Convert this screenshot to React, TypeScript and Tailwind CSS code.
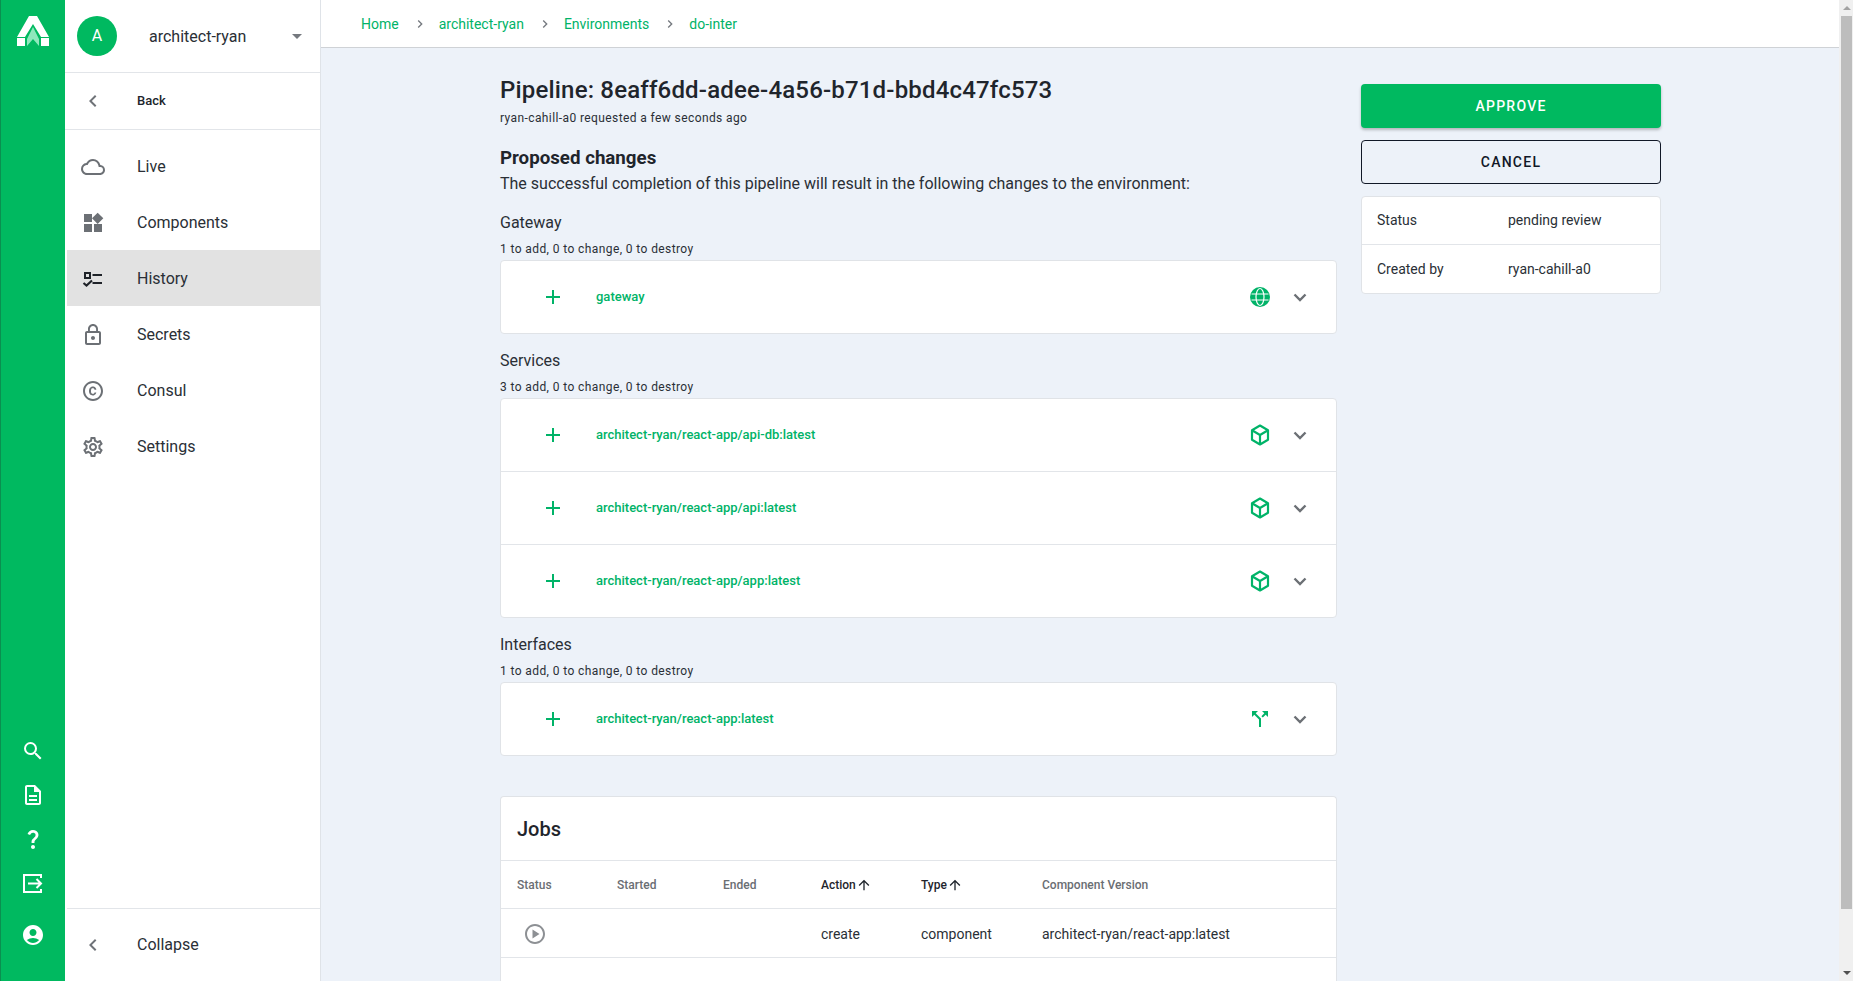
import type { ReactNode } from "react";
import {
  MdAccountCircle,
  MdAdd,
  MdArrowDropDown,
  MdArrowUpward,
  MdCallSplit,
  MdChevronLeft,
  MdLockOutline,
  MdNavigateNext,
  MdOutlineCloud,
  MdOutlineCopyright,
  MdOutlineDescription,
  MdOutlinePlayCircle,
  MdOutlineSettings,
  MdQuestionMark,
  MdSearch,
  MdWidgets,
} from "react-icons/md";

function Logo() {
  return (
    <svg width="34" height="32" viewBox="0 0 34 32">
      <path d="M13 1h8l12 21h-8L17 9 9 22H1z" fill="#fff" />
      <path d="M17 12l6 12v7l-6-7-6 7v-7z" fill="#8fe8bd" />
      <rect x="1" y="23" width="8" height="8" fill="#fff" />
      <rect x="25" y="23" width="8" height="8" fill="#fff" />
    </svg>
  );
}

function HistoryIcon() {
  return (
    <svg width="24" height="24" viewBox="0 0 24 24" fill="none" stroke="#1f2329" strokeWidth="2.200">
      <rect x="4" y="6" width="5" height="5" strokeWidth="2" />
      <path d="M11.500 8h9.500M11.500 16h9.500" />
      <path d="M2.500 16l3 2.500L11 13.500" />
    </svg>
  );
}

function GlobeIcon() {
  return (
    <svg width="24" height="24" viewBox="0 0 24 24" fill="none">
      <circle cx="12" cy="12" r="10" fill="#00b368" />
      <g stroke="#fff" strokeWidth="1.200">
        <ellipse cx="12" cy="12" rx="4" ry="8.500" />
        <path d="M3.500 9h17M3.500 15h17" />
      </g>
    </svg>
  );
}

function ExitIcon() {
  return (
    <svg width="24" height="24" viewBox="0 0 24 24" fill="none" stroke="#fff" strokeWidth="2">
      <path d="M20 7V4H3v17h17v-3" />
      <path d="M7 12.500h13M15.500 8l4.500 4.500-4.500 4.500" />
    </svg>
  );
}

function CubeIcon() {
  return (
    <svg width="24" height="24" viewBox="0 0 24 24" fill="none" stroke="#00b368" strokeWidth="2.200" strokeLinejoin="round">
      <path d="M12 2.500l8 4.700v9.600L12 21.500l-8-4.700V7.200z" />
      <path d="M4 7.200l8 4.800 8-4.800M12 12v9.500" />
    </svg>
  );
}

function ChevronDown() {
  return (
    <svg width="24" height="24" viewBox="0 0 24 24" fill="none" stroke="#6c7075" strokeWidth="2.400">
      <path d="M6.500 9.500l5.500 5.500 5.500-5.500" />
    </svg>
  );
}

const navItems = [
  { label: "Live", icon: <MdOutlineCloud size={28} /> },
  { label: "Components", icon: <MdWidgets size={24} /> },
  { label: "History", icon: <HistoryIcon />, active: true },
  { label: "Secrets", icon: <MdLockOutline size={26} /> },
  { label: "Consul", icon: <MdOutlineCopyright size={24} /> },
  { label: "Settings", icon: <MdOutlineSettings size={24} /> },
];

function Sidebar() {
  return (
    <aside className="flex w-[256px] shrink-0 flex-col border-r border-[#dfe3e8] bg-white">
      <div className="flex h-[73px] items-center border-b border-[#e2e5e9] pl-[12px] pr-[11px]">
        <div className="flex h-10 w-10 items-center justify-center rounded-full bg-[#00b960] text-base text-white">
          A
        </div>
        <span className="ml-8 flex-1 pt-[2px] text-base text-[#2a2f36]">architect-ryan</span>
        <MdArrowDropDown size={24} className="text-[#75797f]" />
      </div>
      <div className="flex h-[57px] items-center border-b border-[#e2e5e9] pl-[16px]">
        <MdChevronLeft size={24} className="text-[#6f7378]" />
        <span className="ml-[32px] text-[13px] font-medium text-[#20252b]">Back</span>
      </div>
      <nav className="flex flex-1 flex-col pt-[8px]">
        {navItems.map((item) => (
          <div
            key={item.label}
            className={`flex h-14 items-center pt-[2px] ${item.active ? "ml-[2px] bg-[#e2e2e2] pl-[14px]" : "pl-[16px]"}`}
          >
            <span className="flex w-6 items-center justify-center text-[#6c7075]">{item.icon}</span>
            <span className="ml-[32px] text-base text-[#2a2f36]">{item.label}</span>
          </div>
        ))}
      </nav>
      <div className="ml-[2px] flex h-[73px] items-center border-t border-[#e2e5e9] pl-[14px]">
        <MdChevronLeft size={24} className="text-[#6f7378]" />
        <span className="ml-[32px] text-base text-[#2a2f36]">Collapse</span>
      </div>
    </aside>
  );
}

function Rail() {
  return (
    <div className="flex w-[65px] shrink-0 flex-col items-center border-l border-[#0a8f50] bg-[#00b960] text-white">
      <div className="mt-[15px]">
        <Logo />
      </div>
      <div className="mt-auto flex flex-col items-center gap-[20px]">
        <MdSearch size={24} />
        <MdOutlineDescription size={24} />
        <MdQuestionMark size={24} />
        <ExitIcon />
      </div>
      <div className="mb-[34px] mt-[28px]">
        <MdAccountCircle size={24} />
      </div>
    </div>
  );
}

function Crumbs() {
  const items = ["Home", "architect-ryan", "Environments", "do-inter"];
  return (
    <header className="flex h-12 shrink-0 items-center border-b border-[#cfd2d6] bg-white pl-[40px]">
      {items.map((item, i) => (
        <div key={item} className="flex items-center">
          {i > 0 && (
            <span className="flex w-[40px] justify-center pl-[2px] text-[#75797f]">
              <MdNavigateNext size={16} />
            </span>
          )}
          <span className="text-sm text-[#00b368]">{item}</span>
        </div>
      ))}
    </header>
  );
}

function ChangeRow({ name, icon }: { name: string; icon: ReactNode }) {
  return (
    <div className="flex h-[73px] items-center border-b border-[#e2e5e9] pl-[40px] pr-[24px] last:h-[72px] last:border-b-0">
      <MdAdd size={24} className="text-[#00b368]" />
      <span className="ml-[31px] flex-1 text-[13px] font-medium text-[#00b368]">{name}</span>
      <span className="flex w-6 justify-center text-[#00b368]">{icon}</span>
      <span className="ml-4">
        <ChevronDown />
      </span>
    </div>
  );
}

function ChangeGroup({ title, summary, children }: { title: string; summary: string; children: ReactNode }) {
  return (
    <section className="mb-[15px]">
      <h3 className="text-base leading-6 text-[#2a2f36]">{title}</h3>
      <p className="mt-[5px] text-xs leading-[18px] tracking-[0.4px] text-[#2a2f36]">{summary}</p>
      <div className="mt-[2px] overflow-hidden rounded border border-[#e0e3e7] bg-white">{children}</div>
    </section>
  );
}

function Jobs() {
  return (
    <section className="mt-[40px] rounded-t border border-b-0 border-[#e0e3e7] bg-white">
      <h2 className="flex h-[64px] items-center border-b border-[#e2e5e9] pl-4 text-xl font-medium text-[#1f252c]">Jobs</h2>
      <div className="grid h-[48px] grid-cols-[100px_106px_98px_100px_121px_1fr] items-center border-b border-[#e2e5e9] pl-4 text-xs font-medium text-[#6a6e73]">
        <span>Status</span>
        <span>Started</span>
        <span>Ended</span>
        <span className="flex items-center text-[#1f252c]">
          Action
          <MdArrowUpward size={16} />
        </span>
        <span className="flex items-center text-[#1f252c]">
          Type
          <MdArrowUpward size={16} />
        </span>
        <span>Component Version</span>
      </div>
      <div className="grid h-[49px] grid-cols-[100px_106px_98px_100px_121px_1fr] items-center border-b border-[#e2e5e9] pl-4 pt-[2px] text-sm text-[#2a2f36]">
        <span className="pl-[6px] text-[#8d9094]">
          <MdOutlinePlayCircle size={24} />
        </span>
        <span />
        <span />
        <span>create</span>
        <span>component</span>
        <span>architect-ryan/react-app:latest</span>
      </div>
      <div className="h-10" />
    </section>
  );
}

function Summary() {
  return (
    <aside className="w-[300px] shrink-0 pt-[10px]">
      <button className="h-11 w-full rounded bg-[#00b960] text-sm font-medium tracking-[1.25px] text-white shadow-[0_2px_3px_rgba(0,0,0,0.25)]">
        APPROVE
      </button>
      <button className="mt-3 h-11 w-full rounded border border-[#111827] text-sm font-medium tracking-[1.25px] text-[#111827]">
        CANCEL
      </button>
      <div className="mt-[12px] rounded border border-[#e0e3e7] bg-white text-sm text-[#2a2f36]">
        <div className="flex h-[48px] items-center border-b border-[#e2e5e9] pb-[2px] pl-[15px]">
          <span className="w-[131px]">Status</span>
          <span>pending review</span>
        </div>
        <div className="flex h-[48px] items-center pl-[15px]">
          <span className="w-[131px]">Created by</span>
          <span>ryan-cahill-a0</span>
        </div>
      </div>
    </aside>
  );
}

function Scrollbar() {
  return (
    <div className="flex w-[14px] shrink-0 flex-col bg-[#f0f0f0] pl-[2px] pr-[1px]">
      <div className="flex h-4 items-center justify-center">
        <div className="h-0 w-0 border-x-[4px] border-b-[4px] border-x-transparent border-b-[#a3a3a3]" />
      </div>
      <div className="h-[893px] bg-[#bdbdbd]" />
      <div className="mt-auto flex h-4 items-center justify-center">
        <div className="h-0 w-0 border-x-[4px] border-t-[4px] border-x-transparent border-t-[#505050]" />
      </div>
    </div>
  );
}

export default function App() {
  return (
    <div className="flex h-screen overflow-hidden bg-[#edf2f9] font-['Roboto',sans-serif]">
      <Rail />
      <Sidebar />
      <div className="flex min-w-0 flex-1 flex-col">
        <Crumbs />
        <main className="flex gap-6 pl-[179px] pt-[26px]">
          <div className="w-[837px] shrink-0">
            <h1 className="text-2xl font-medium leading-8 tracking-[0.18px] text-[#1f252c]">
              Pipeline: 8eaff6dd-adee-4a56-b71d-bbd4c47fc573
            </h1>
            <p className="mt-[3px] text-xs leading-[18px] tracking-[0.4px] text-[#2a2f36]">
              ryan-cahill-a0 requested a few seconds ago
            </p>
            <h2 className="mt-[17px] text-[18.72px] font-bold leading-7 text-[#1f252c]">Proposed changes</h2>
            <p className="mt-[1px] text-base leading-[22px] text-[#2a2f36]">
              The successful completion of this pipeline will result in the following changes to the environment:
            </p>
            <div className="mt-[16px]">
              <ChangeGroup title="Gateway" summary="1 to add, 0 to change, 0 to destroy">
                <ChangeRow name="gateway" icon={<GlobeIcon />} />
              </ChangeGroup>
              <ChangeGroup title="Services" summary="3 to add, 0 to change, 0 to destroy">
                <ChangeRow name="architect-ryan/react-app/api-db:latest" icon={<CubeIcon />} />
                <ChangeRow name="architect-ryan/react-app/api:latest" icon={<CubeIcon />} />
                <ChangeRow name="architect-ryan/react-app/app:latest" icon={<CubeIcon />} />
              </ChangeGroup>
              <ChangeGroup title="Interfaces" summary="1 to add, 0 to change, 0 to destroy">
                <ChangeRow name="architect-ryan/react-app:latest" icon={<MdCallSplit size={24} />} />
              </ChangeGroup>
            </div>
            <Jobs />
          </div>
          <Summary />
        </main>
      </div>
      <Scrollbar />
    </div>
  );
}
